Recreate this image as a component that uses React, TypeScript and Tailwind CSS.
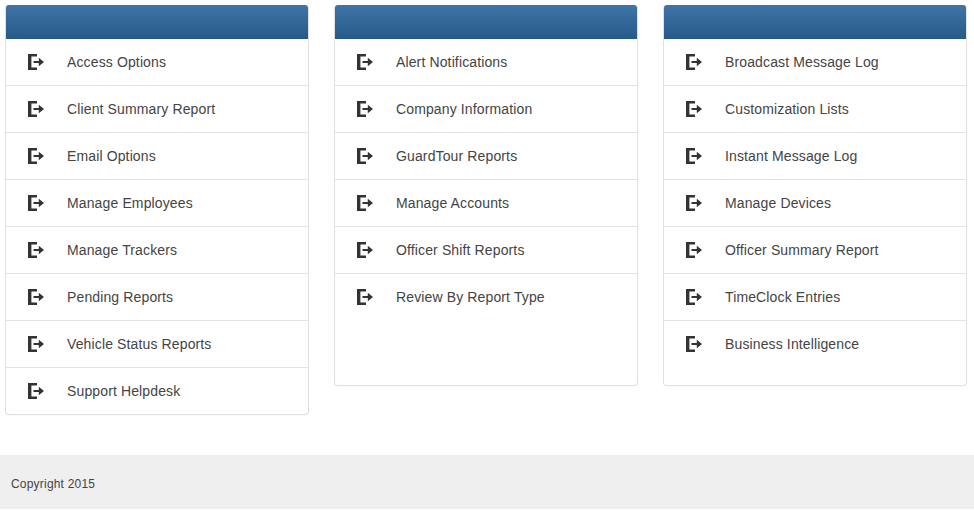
import React from 'react';

const columns = [
  ['Access Options', 'Client Summary Report', 'Email Options', 'Manage Employees', 'Manage Trackers', 'Pending Reports', 'Vehicle Status Reports', 'Support Helpdesk'],
  ['Alert Notifications', 'Company Information', 'GuardTour Reports', 'Manage Accounts', 'Officer Shift Reports', 'Review By Report Type'],
  ['Broadcast Message Log', 'Customization Lists', 'Instant Message Log', 'Manage Devices', 'Officer Summary Report', 'TimeClock Entries', 'Business Intelligence'],
];

// glyphicon-log-in style bracket with arrow
const LogIcon = () => (
  <svg width="16" height="16" viewBox="0 0 16 16" className="shrink-0">
    <path d="M0 0H9V2.6H3.4V13.4H9V16H0Z" fill="#333" />
    <path d="M5.5 6.9H10.8V3.8L16 8L10.8 12.2V9.1H5.5Z" fill="#333" />
  </svg>
);

const MenuCard = ({ items }: { items: string[] }) => (
  <div className="w-[304px] min-h-[381px] self-start rounded-[4px] border border-[#e0e0e0] border-t-0 bg-white shadow-[0_1px_1px_rgba(0,0,0,0.02)]">
    <div className="h-[34px] rounded-t-[3px] bg-gradient-to-b from-[#3f74a8] to-[#265a88]" />
    <ul>
      {items.map((item, i) => (
        <li
          key={item}
          className={`flex items-center pl-[22px] text-[14px] tracking-[0.13px] text-[#444] ${i < items.length - 1 ? 'h-[47px] border-b border-[#e3e3e3]' : 'h-[46px]'}`}
        >
          <LogIcon />
          <span className="ml-[23px]">{item}</span>
        </li>
      ))}
    </ul>
  </div>
);

export default function App() {
  return (
    <div className="h-[510px] overflow-hidden bg-white font-['Liberation_Sans',Arial,sans-serif]">
      <div className="flex h-[455px] gap-[25px] pl-[5px] pt-[5px]">
        {columns.map((items, i) => (
          <MenuCard key={i} items={items} />
        ))}
      </div>
      <footer className="flex h-[54px] items-center bg-[#efefef] pl-[11px] pt-[3px] text-[12px] tracking-[0.2px] text-[#444]">
        Copyright 2015
      </footer>
    </div>
  );
}
